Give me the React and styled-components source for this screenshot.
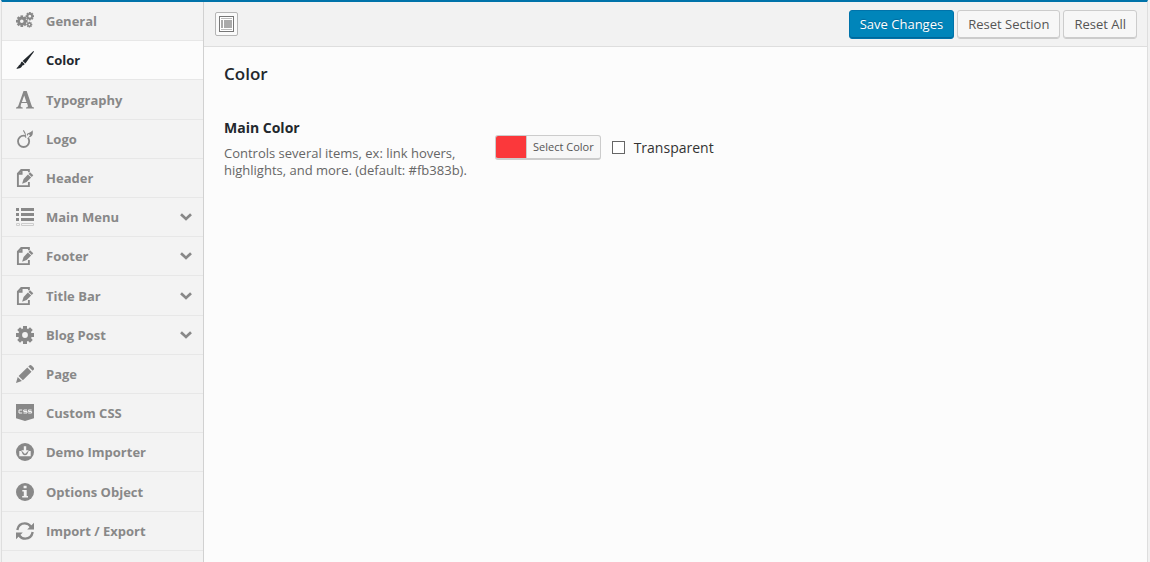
import React from "react";
import styled, { createGlobalStyle, css } from "styled-components";

const GlobalStyle = createGlobalStyle`
  * { box-sizing: border-box; }
  body {
    margin: 0;
    background: #f1f1f1;
    color: #23282d;
    font-family: "Open Sans", "Noto Sans", sans-serif;
    font-size: 13px;
    line-height: 18px;
  }
`;

const Panel = styled.div`
  display: flex;
  min-height: 100vh;
  margin: 0 2px 0 1px;
  border: 1px solid #dedede;
  border-top: 2px solid #0073aa;
  border-bottom: 0;
  background: #fcfcfc;
`;

const Sidebar = styled.nav`
  flex: 0 0 202px;
  border-right: 1px solid #d1d1d1;
  background: #f3f3f3;
`;

const Menu = styled.ul`
  margin: 0;
  padding: 0;
  list-style: none;
`;

const MenuItem = styled.li`
  display: flex;
  height: 39px;
  border-bottom: 1px solid #e7e7e7;

  &:nth-child(5n + 3) {
    height: 40px;
  }
`;

const MenuLink = styled.a`
  flex: 1;
  display: flex;
  align-items: center;
  gap: 12px;
  padding: 0 11px 0 14px;
  color: #888;
  font-weight: 700;
  text-decoration: none;

  ${({ $active }) =>
    $active &&
    css`
      background: #fcfcfc;
      color: #23282d;
    `}
`;

const MenuLabel = styled.span`
  flex: 1;
`;

const Icon = styled.svg`
  flex: none;
  display: block;
  fill: currentColor;
`;

const Main = styled.main`
  flex: 1;
  min-width: 0;
`;

const Toolbar = styled.header`
  display: flex;
  justify-content: space-between;
  padding: 8px 10px 7px 11px;
  border-bottom: 1px solid #dedede;
  background: #f2f2f2;
`;

const ExpandButton = styled.button`
  display: grid;
  place-items: center;
  width: 23px;
  height: 24px;
  margin-top: 2px;
  padding: 0;
  border: 1px solid #b5b5b5;
  border-radius: 2px;
  background: #fafafa;
  color: #777;
`;

const Actions = styled.div`
  display: flex;
  gap: 3px;
`;

const Button = styled.button`
  height: 29px;
  padding: 0 10px 1px;
  border: 1px solid #ccc;
  border-radius: 3px;
  background: #f7f7f7;
  box-shadow: inset 0 -1px 0 #ccc;
  color: #555;
  font: 13px/26px "Open Sans", sans-serif;
  white-space: nowrap;

  ${({ $primary }) =>
    $primary &&
    css`
      border-color: #0073aa;
      background: #0085ba;
      box-shadow: inset 0 -1px 0 #006799;
      color: #fff;
      text-shadow: 0 -1px 1px #006799;
    `}
`;

const Section = styled.section`
  padding: 16px 20px;
`;

const SectionTitle = styled.h2`
  margin: 0 0 33px;
  font-size: 17px;
  font-weight: 600;
  line-height: 22px;
`;

const Field = styled.div`
  display: grid;
  grid-template-columns: 271px 1fr;
`;

const FieldTitle = styled.h3`
  margin: 0 0 7px;
  font-size: 14px;
  font-weight: 700;
  line-height: 20px;
`;

const FieldHint = styled.p`
  margin: 0;
  padding-right: 20px;
  color: #666;
  line-height: 17px;
`;

const Controls = styled.div`
  display: flex;
  align-items: flex-start;
  gap: 11px;
  padding-top: 17px;
`;

const ColorButton = styled.button`
  display: flex;
  height: 25px;
  padding: 0;
  overflow: hidden;
  border: 1px solid #ccc;
  border-bottom-width: 2px;
  border-radius: 3px;
  background: #f7f7f7;
  color: #555;
  font: 11px/22px "Open Sans", sans-serif;
`;

const Swatch = styled.span`
  width: 30px;
  align-self: stretch;
  background: #fb383b;
`;

const ColorLabel = styled.span`
  padding: 0 6px;
  border-left: 1px solid #ccc;
`;

const CheckLabel = styled.label`
  display: flex;
  align-items: center;
  gap: 9px;
  height: 25px;
  color: #333;
  font-size: 14px;
`;

const Checkbox = styled.input`
  appearance: none;
  width: 13px;
  height: 13px;
  margin: 0;
  border: 1px solid #666;
  background: #fff;

  &:checked {
    background: #0085ba;
  }
`;

function Gear({ x, y, r, hole, teeth = 8, tooth }) {
  const inner = r * 0.76;
  return (
    <g transform={`translate(${x} ${y})`}>
      <circle r={(inner + hole) / 2} fill="none" stroke="currentColor" strokeWidth={inner - hole} />
      {Array.from({ length: teeth }, (_, i) => (
        <rect
          key={i}
          x={-tooth / 2}
          y={-r}
          width={tooth}
          height={r - inner + 0.8}
          transform={`rotate(${(i * 360) / teeth})`}
        />
      ))}
    </g>
  );
}

const drawings = {
  gears: (
    <>
      <Gear x={5.8} y={9.2} r={5.8} hole={1.8} tooth={2.7} />
      <Gear x={13.8} y={4.2} r={4.2} hole={1.4} tooth={2} />
      <Gear x={13.4} y={12.6} r={2.9} hole={0.9} tooth={1.4} />
    </>
  ),
  brush: (
    <path d="M17.700.1c.3.300.2.700-.1 1.200L9.400 12.500 6.600 9.900 16.400.9c.5-.4 1-.900 1.300-.8zM6 10.600l2.700 2.500c-.4.600-.7.800-1.300 1.100l-1 .3-.9 1.600C4.500 17 3 17.800.6 17.900c.2-.7.300-1.200 1.100-1.800.8-.7.900-1.500 1.500-2.100l1.200-.7c.2-1.100.6-2 1.600-2.700z" />
  ),
  type: (
    <path
      fillRule="evenodd"
      d="M7.500 0h3.200l4.800 14.200c.5 1.500 1 2.100 2.500 2.300v1h-8v-1c1.700-.2 2.200-.600 1.800-1.900l-.8-2.500H5.400l-.6 1.800c-.5 1.600 0 2.400 1.900 2.600v1H0v-1c1.400-.2 2-.8 2.500-2.200L7.500 0zm.7 4.500L5.900 11h4.500L8.200 4.500z"
    />
  ),
  fruit: (
    <>
      <ellipse cx="7.600" cy="11.300" rx="5.600" ry="5.700" fill="none" stroke="currentColor" strokeWidth="1.800" />
      <path d="M16.600.2c.7 3.700-.1 7.100-4.300 7.200-1.600.1-2.500-.900-2-2.400.7-2.200 3.900-1.800 6.300-4.800z" />
      <path d="M7.700.3c1.700 2 2.600 4.300 2.700 7.800l3-3.500" fill="none" stroke="#f3f3f3" strokeWidth="1.800" />
      <path d="M7.400.4c1.600 1.900 2.400 4.300 2.400 7.300" fill="none" stroke="currentColor" strokeWidth="1.100" />
    </>
  ),
  edit: (
    <>
      <path
        d="M12.900 3.200V1H5.300L1.900 4.600v12.500h11v-4M5.600 1.200v3.600H2"
        fill="none"
        stroke="currentColor"
        strokeWidth="1.900"
      />
      <path d="M14.100 3.300l3.200 3-1.500 1.700-3.300-3.100 1.600-1.600zM11.900 5.500l3.300 3.100-4.600 4.500-4.500 1.600 1.500-4.700 4.300-4.500z" />
    </>
  ),
  list: (
    <>
      <path d="M0 0h3v3H0zM5 0h13v3H5zM0 5h3v3H0zM5 5h13v3H5zM0 10h3v3H0zM5 10h13v3H5z" />
      <path d="M.5 15.500h3v2h-3zM5.500 15.500h12v2h-12z" fill="none" stroke="#ccc" />
    </>
  ),
  gear: <Gear x={9} y={9} r={9} hole={2.9} tooth={4} />,
  pencil: (
    <path d="M12.300 1.600l1.200-1.200c.6-.6 1.600-.3 2.600.6l1.200 1.200c.9.900 1 1.900.5 2.400l-1.200 1.200-4.300-4.200zM11.300 2.600l4.200 4.200-8.600 8.500-4.300-4.200 8.700-8.500zM1.700 12l4.200 4.100L0 18l1.700-6z" />
  ),
  shield: (
    <>
      <path d="M0 0h18v14.300L9 17.100 0 14.300z" />
      <path
        d="M6.200 6H3v3h3.200M11 6H7.700v1.500H11V9H7.500M15.600 6h-3.200v1.500h3.200V9h-3.400"
        fill="none"
        stroke="#f3f3f3"
        strokeWidth="1"
      />
    </>
  ),
  download: (
    <>
      <circle cx="9" cy="9" r="9" />
      <path d="M7.800 3.200h2.400v4h2.600L9 11 5.200 7.200h2.600z" fill="#f3f3f3" />
      <path d="M3.300 8h2l1.500 3.300c1.200 1.200 3.200 1.200 4.400 0L12.700 8h2v5.200H3.300z" fill="#f3f3f3" />
    </>
  ),
  info: (
    <>
      <circle cx="9" cy="9" r="9" />
      <path d="M7.600 2.700h3v2.500h-3zM6.300 6.900h4.400v6.200H12v1.500H6.200v-1.500h1.600V8.400H6.300z" fill="#f3f3f3" />
    </>
  ),
  refresh: (
    <>
      <path
        d="M1.300 7.900C2.100 3.900 5 1.400 8.800 1.400c2.700 0 4.700 1.200 6.200 3.400M16.700 10.100c-.8 4-3.700 6.500-7.500 6.500-2.700 0-4.700-1.200-6.200-3.400"
        fill="none"
        stroke="currentColor"
        strokeWidth="2.400"
      />
      <path d="M18 .8v6.700h-6.800L18 .8zM0 17.200v-6.700h6.800L0 17.200z" />
    </>
  ),
};

const items = [
  { label: "General", icon: "gears" },
  { label: "Color", icon: "brush", active: true },
  { label: "Typography", icon: "type" },
  { label: "Logo", icon: "fruit" },
  { label: "Header", icon: "edit" },
  { label: "Main Menu", icon: "list", expands: true },
  { label: "Footer", icon: "edit", expands: true },
  { label: "Title Bar", icon: "edit", expands: true },
  { label: "Blog Post", icon: "gear", expands: true },
  { label: "Page", icon: "pencil" },
  { label: "Custom CSS", icon: "shield" },
  { label: "Demo Importer", icon: "download" },
  { label: "Options Object", icon: "info" },
  { label: "Import / Export", icon: "refresh" },
];

export default function App() {
  return (
    <>
      <GlobalStyle />
      <Panel>
        <Sidebar aria-label="Sections">
          <Menu>
            {items.map(({ label, icon, active, expands }) => (
              <MenuItem key={label}>
                <MenuLink href="#" $active={active} aria-current={active ? "page" : undefined}>
                  <Icon width="18" height="18" viewBox="0 0 18 18" aria-hidden="true">
                    {drawings[icon]}
                  </Icon>
                  <MenuLabel>{label}</MenuLabel>
                  {expands && (
                    <Icon width="12" height="8" viewBox="0 0 12 8" aria-hidden="true">
                      <path d="M1 1.200l5 4.700 5-4.700" fill="none" stroke="currentColor" strokeWidth="2.700" />
                    </Icon>
                  )}
                </MenuLink>
              </MenuItem>
            ))}
          </Menu>
        </Sidebar>
        <Main>
          <Toolbar>
            <ExpandButton type="button" aria-label="Expand">
              <Icon width="15" height="16" viewBox="0 0 15 16" aria-hidden="true">
                <rect x=".5" y=".5" width="14" height="15" fill="#fff" stroke="currentColor" />
                <path d="M2 2h11v1H2zM2 13h11v1H2z" fill="#bbb" />
                <path d="M2 4h2v8H2zM5 4h8v8H5z" fill="#aaa" />
              </Icon>
            </ExpandButton>
            <Actions>
              <Button type="button" $primary>Save Changes</Button>
              <Button type="button">Reset Section</Button>
              <Button type="button">Reset All</Button>
            </Actions>
          </Toolbar>
          <Section>
            <SectionTitle>Color</SectionTitle>
            <Field>
              <div>
                <FieldTitle>Main Color</FieldTitle>
                <FieldHint>
                  Controls several items, ex: link hovers, highlights, and more. (default: #fb383b).
                </FieldHint>
              </div>
              <Controls>
                <ColorButton type="button">
                  <Swatch />
                  <ColorLabel>Select Color</ColorLabel>
                </ColorButton>
                <CheckLabel>
                  <Checkbox type="checkbox" />
                  Transparent
                </CheckLabel>
              </Controls>
            </Field>
          </Section>
        </Main>
      </Panel>
    </>
  );
}
